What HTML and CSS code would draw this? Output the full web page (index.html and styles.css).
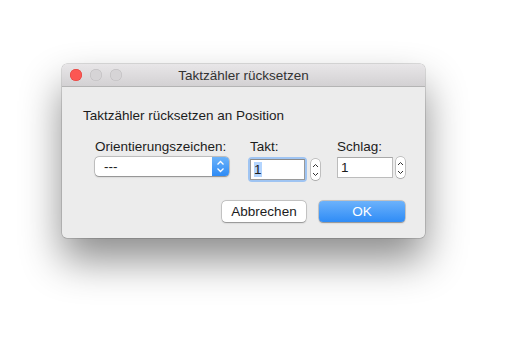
FILE: index.html
```html
<!DOCTYPE html>
<html>
<head>
<meta charset="utf-8">
<link rel="stylesheet" href="styles.css">
</head>
<body>
<div class="stage">
  <div class="window">
    <div class="titlebar">
      <div class="lights">
        <span class="light red"></span>
        <span class="light"></span>
        <span class="light"></span>
      </div>
      <div class="title">Taktzähler rücksetzen</div>
    </div>
    <div class="content">
      <div class="heading">Taktzähler rücksetzen an Position</div>
      <div class="fields">
        <div class="col col-orient">
          <div class="label">Orientierungszeichen:</div>
          <div class="popup">
            <span class="popup-value">---</span>
            <span class="popup-arrows">
              <svg width="9" height="13" viewBox="0 0 9 13"><path d="M1.5 4.5 L4.5 1.5 L7.5 4.5 M1.5 8.5 L4.5 11.5 L7.5 8.5" fill="none" stroke="#fff" stroke-width="1.3"/></svg>
            </span>
          </div>
        </div>
        <div class="col col-takt">
          <div class="label">Takt:</div>
          <div class="numrow">
            <div class="focusring"><div class="field"><span class="sel">1</span></div></div>
            <div class="stepper">
              <svg width="7" height="18" viewBox="0 0 7 18"><path d="M1 6 L3.5 3.5 L6 6 M1 12 L3.5 14.5 L6 12" fill="none" stroke="#333" stroke-width="1"/></svg>
            </div>
          </div>
        </div>
        <div class="col col-schlag">
          <div class="label">Schlag:</div>
          <div class="numrow">
            <div class="field plain">1</div>
            <div class="stepper">
              <svg width="7" height="18" viewBox="0 0 7 18"><path d="M1 6 L3.5 3.5 L6 6 M1 12 L3.5 14.5 L6 12" fill="none" stroke="#333" stroke-width="1"/></svg>
            </div>
          </div>
        </div>
      </div>
      <div class="buttons">
        <button class="btn">Abbrechen</button>
        <button class="btn primary">OK</button>
      </div>
    </div>
  </div>
</div>
</body>
</html>
```
FILE: styles.css
```css
html, body {
  margin: 0;
  padding: 0;
  background: #ffffff;
}
html { height: 100%; }
body {
  min-height: 100%;
  font-family: "Liberation Sans", Arial, sans-serif;
  font-size: 13.5px;
  color: #1c1c1c;
}
.stage {
  padding: 64px 0 0 62px;
}
.window {
  width: 363px;
  height: 174px;
  background: #ececec;
  border-radius: 5px;
  box-shadow: 0 0 0 0.5px rgba(0,0,0,0.25), 0 22px 40px rgba(0,0,0,0.45);
  overflow: hidden;
  display: flex;
  flex-direction: column;
}
.titlebar {
  height: 22px;
  background: linear-gradient(#e8e6e8, #d3d1d3);
  border-bottom: 1px solid #b4b4b4;
  display: flex;
  align-items: center;
  position: relative;
  flex: none;
}
.lights {
  display: flex;
  gap: 8px;
  padding-left: 8px;
}
.light {
  width: 12px;
  height: 12px;
  border-radius: 50%;
  background: #d6d4d6;
  box-shadow: inset 0 0 0 0.5px #bcbabc;
}
.light.red {
  background: #fc5753;
  box-shadow: inset 0 0 0 0.5px #df3d38;
}
.title {
  position: absolute;
  left: 0;
  right: 0;
  text-align: center;
  font-size: 13.5px;
  color: #333;
  top: 4px;
}
.content {
  padding: 21px 20px 0 21px;
  display: flex;
  flex-direction: column;
}
.heading {
  line-height: 16px;
  height: 16px;
}
.fields {
  display: flex;
  margin-top: 15px;
  padding-left: 12px;
}
.label {
  line-height: 16px;
  height: 16px;
  margin-bottom: 2px;
}
.col-orient { width: 155px; }
.col-takt { width: 87px; }
.popup {
  width: 134px;
  height: 19px;
  margin-top: 1px;
  background: #fff;
  border-radius: 4px;
  box-shadow: 0 0 0 0.5px rgba(0,0,0,0.3), 0 0.5px 1.5px rgba(0,0,0,0.3);
  display: flex;
  align-items: center;
  overflow: hidden;
}
.popup-value {
  flex: 1;
  padding-left: 9px;
  line-height: 19px;
}
.popup-arrows {
  width: 17px;
  height: 19px;
  background: linear-gradient(#6cb3fa, #2e8bf5);
  display: flex;
  align-items: center;
  justify-content: center;
}
.numrow {
  display: flex;
  align-items: center;
}
.focusring {
  padding: 2px;
  margin-left: -2px;
  border-radius: 4px;
  background: #9fc4f2;
}
.field {
  width: 50px;
  height: 19px;
  background: #fff;
  border: 1px solid #9a9a9a;
  border-top-color: #8a8a8a;
  box-sizing: content-box;
  line-height: 19px;
  padding-left: 3px;
}
.field.plain {
  width: 51px;
  border-color: #bcbcbc;
  border-top-color: #a8a8a8;
}
.sel {
  background: #b4d5fe;
}
.stepper {
  margin-left: 4px;
  width: 9px;
  height: 21px;
  background: #fff;
  border-radius: 4px;
  box-shadow: 0 0 0 0.5px rgba(0,0,0,0.35), 0 0.5px 1px rgba(0,0,0,0.2);
  display: flex;
  align-items: center;
  justify-content: center;
}
.col-schlag .stepper { margin-left: 3px; }
.buttons {
  display: flex;
  justify-content: flex-end;
  gap: 13px;
  margin-top: 19px;
  padding-right: 0px;
}
.btn {
  font-family: inherit;
  font-size: 13.5px;
  height: 21px;
  border: none;
  border-radius: 4px;
  background: #fff;
  color: #1c1c1c;
  box-shadow: 0 0 0 0.5px rgba(0,0,0,0.25), 0 0.5px 1.5px rgba(0,0,0,0.3);
  padding: 0;
  width: 84px;
  line-height: 21px;
}
.btn.primary {
  width: 86px;
  background: linear-gradient(#6cb2fb, #2f8cf6);
  color: #fff;
}
```
